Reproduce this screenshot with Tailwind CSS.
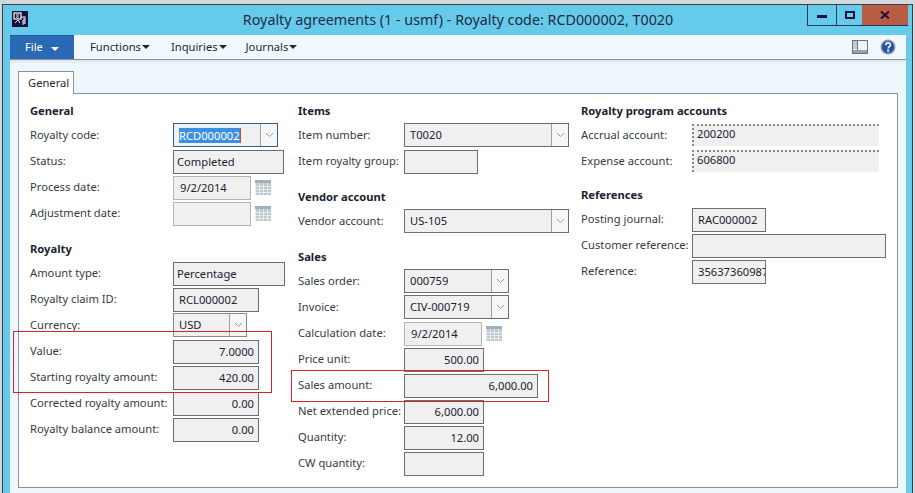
<!DOCTYPE html>
<html>
<head>
<meta charset="utf-8">
<script src="https://cdn.jsdelivr.net/npm/@tailwindcss/browser@4"></script>
</head>
<body class="m-0 overflow-hidden bg-[#d4d8dc]">
<div class="relative w-[915px] h-[493px] overflow-hidden font-['Noto_Sans',sans-serif] text-[11.2px] text-[#333b45] pt-[4px] pl-[2px] pr-[2px]">
  <!-- window -->
  <div class="w-full h-[489px] border-t border-l border-r border-[#3a4048] bg-[#66cbea] flex flex-col">
    <!-- title bar -->
    <div class="relative h-[30px] shrink-0 flex items-center justify-center">
      <svg class="absolute left-[9px] top-[6px] w-[16px] h-[16px]" viewBox="0 0 16 16">
        <rect width="16" height="16" fill="#14103e"/>
        <rect x="2" y="2" width="7" height="6" fill="none" stroke="#fff" stroke-width="1.2"/>
        <path d="M4 4h3M4 6h3M9 6h3v7M3 12l3-3 2 3M11 9v5M13 5v8" stroke="#e8e8f0" stroke-width="1" fill="none"/>
      </svg>
      <span class="text-[14.3px] text-[#1f2a44] ml-[1px]">Royalty agreements (1 - usmf) - Royalty code: RCD000002, T0020</span>
      <div class="absolute right-[4px] top-0 flex h-[21px] border-b border-[#1e3d55]">
        <div class="w-[29px] border-l border-[#1e3d55] flex items-center justify-center">
          <div class="w-[10px] h-[3px] bg-[#1c0f40] mt-[2px]"></div>
        </div>
        <div class="w-[26px] border-l border-[#1e3d55] flex items-center justify-center">
          <div class="w-[10px] h-[8px] border-2 border-[#1c0f40] mb-[1px]"></div>
        </div>
        <div class="w-[46px] bg-[#b95c44] flex items-center justify-center">
          <svg class="w-[10px] h-[8px]" viewBox="0 0 10 8"><path d="M1 0.5l8 7M9 0.5l-8 7" stroke="#1c0f40" stroke-width="2" fill="none"/></svg>
        </div>
      </div>
    </div>
    <!-- body -->
    <div class="flex-1 ml-[7px] mr-[6px] bg-[#eef7fd] flex flex-col min-h-0">
      <!-- ribbon -->
      <div class="h-[25px] shrink-0 bg-[#f1f8fe] border-b border-[#8b9199] flex items-center relative">
        <div class="w-[64px] h-[24px] bg-[#2a6ab5] text-white flex items-center pl-[15px] gap-[8px] border-t border-[#1d5aa3]">
          <span>File</span>
          <span class="w-0 h-0 border-l-[4px] border-r-[4px] border-t-[4px] border-l-transparent border-r-transparent border-t-white mt-[2px]"></span>
        </div>
        <div class="flex ml-[16px] gap-[19px] text-[#1f2733]">
          <span class="flex items-center gap-[1px] mr-[2px]">Functions<i class="w-0 h-0 border-l-[4px] border-r-[4px] border-t-[4px] border-l-transparent border-r-transparent border-t-[#1f2733]"></i></span>
          <span class="flex items-center gap-[1px]">Inquiries<i class="w-0 h-0 border-l-[4px] border-r-[4px] border-t-[4px] border-l-transparent border-r-transparent border-t-[#1f2733]"></i></span>
          <span class="flex items-center gap-[1px]">Journals<i class="w-0 h-0 border-l-[4px] border-r-[4px] border-t-[4px] border-l-transparent border-r-transparent border-t-[#1f2733]"></i></span>
        </div>
        <svg class="absolute left-[842px] top-[5px] w-[16px] h-[14px]" viewBox="0 0 16 14">
          <rect x="0.5" y="0.5" width="15" height="13" fill="#f4f4f4" stroke="#6d747c"/>
          <rect x="1" y="1" width="4" height="8" fill="#c8cacc"/>
          <rect x="1" y="10" width="14" height="3" fill="#9aa0a6"/>
          <path d="M5.5 1v9" stroke="#6d747c"/>
        </svg>
        <svg class="absolute left-[870px] top-[4px] w-[16px] h-[16px]" viewBox="0 0 16 16">
          <circle cx="8" cy="8" r="7.5" fill="#8f98a3"/>
          <circle cx="8" cy="8" r="6" fill="#1d52ad"/>
          <path d="M5.8 6.2c0-3 4.6-3 4.6-.2 0 1.7-2.2 1.7-2.2 3.4" stroke="#fff" stroke-width="1.7" fill="none"/>
          <rect x="7.2" y="10.6" width="2" height="2" fill="#fff"/>
        </svg>
      </div>
      <!-- tab strip -->
      <div class="h-[11px] shrink-0 bg-gradient-to-b from-[#dce3e9] to-[#eef7fd] [background-size:100%_4px] bg-no-repeat"></div>
      <div class="ml-[8px] w-[56px] h-[23px] -mb-px relative z-10 bg-white border border-b-0 border-[#8b9199] pl-[9px] pt-[3px] text-[#1f2733]">General</div>
      <!-- panel -->
      <div class="ml-[8px] mr-[8px] h-[395px] bg-white border border-[#8b9199] pt-[7px] pl-[11px] flex shrink-0 whitespace-nowrap">
        <!-- col 1 -->
        <div class="w-[268px] shrink-0 flex flex-col">
          <div class="h-[22px] pb-[1px] font-bold text-[#1a2230] flex items-center">General</div>
          <div class="h-[26px] flex items-center">
            <span class="w-[143px] shrink-0 mb-[2px]">Royalty code:</span>
            <div class="w-[105px] h-[24px] -translate-y-px border border-[#2f5f8c] bg-[#f0f0f0] flex items-center pl-[5px]">
              <span class="bg-[#3d8fe0] text-white h-[15px] leading-[15px] border-r border-[#c9502f]">RCD000002</span>
              <span class="ml-auto w-[17px] h-full border-l border-[#a0a0a0] bg-[#f6f6f6] flex items-center justify-center"><svg class="w-[9px] h-[6px]" viewBox="0 0 9 6"><path d="M1 1l3.5 3.5L8 1" stroke="#9a9a9a" fill="none"/></svg></span>
            </div>
          </div>
          <div class="h-[26px] flex items-center">
            <span class="w-[143px] shrink-0 mb-[2px]">Status:</span>
            <div class="w-[111px] h-[24px] border border-[#6e6e6e] bg-[#f0f0f0] flex items-center pl-[3px] text-[#1a2230]">Completed</div>
          </div>
          <div class="h-[26px] flex items-center">
            <span class="w-[143px] shrink-0 mb-[2px]">Process date:</span>
            <div class="w-[78px] h-[24px] border border-[#b4b4b4] bg-[#f0f0f0] flex items-center pl-[6px] text-[#1a2230]">9/2/2014</div>
            <svg class="ml-[4px] w-[16px] h-[15px] mb-[2px]" viewBox="0 0 16 15"><rect width="16" height="15" fill="#bcc9cf"/><rect y="0" width="16" height="3" fill="#9fb0b8"/><path d="M0.5 3v12M4.5 3v12M8.5 3v12M12.5 3v12M0 6.5h16M0 9.5h16M0 12.5h16" stroke="#e6edf0"/></svg>
          </div>
          <div class="h-[26px] flex items-center">
            <span class="w-[143px] shrink-0 mb-[2px]">Adjustment date:</span>
            <div class="w-[78px] h-[24px] border border-[#b4b4b4] bg-[#f0f0f0]"></div>
            <svg class="ml-[4px] w-[16px] h-[15px] mb-[2px]" viewBox="0 0 16 15"><rect width="16" height="15" fill="#bcc9cf"/><rect y="0" width="16" height="3" fill="#9fb0b8"/><path d="M0.5 3v12M4.5 3v12M8.5 3v12M12.5 3v12M0 6.5h16M0 9.5h16M0 12.5h16" stroke="#e6edf0"/></svg>
          </div>
          <div class="h-[12px]"></div>
          <div class="h-[22px] pb-[1px] font-bold text-[#1a2230] flex items-center">Royalty</div>
          <div class="h-[26px] flex items-center">
            <span class="w-[143px] shrink-0 mb-[2px]">Amount type:</span>
            <div class="w-[112px] h-[24px] border border-[#6e6e6e] bg-[#f0f0f0] flex items-center pl-[3px] text-[#1a2230]">Percentage</div>
          </div>
          <div class="h-[26px] flex items-center">
            <span class="w-[143px] shrink-0 mb-[2px]">Royalty claim ID:</span>
            <div class="w-[86px] h-[24px] border border-[#6e6e6e] bg-[#f0f0f0] flex items-center pl-[5px] text-[#1a2230]">RCL000002</div>
          </div>
          <div class="h-[26px] flex items-center">
            <span class="w-[143px] shrink-0 mb-[2px]">Currency:</span>
            <div class="w-[74px] h-[24px] -translate-y-px border border-[#8a8a8a] bg-[#f0f0f0] flex items-center pl-[5px] text-[#1a2230]">USD
              <span class="ml-auto w-[17px] h-full border-l border-[#a0a0a0] bg-[#f6f6f6] flex items-center justify-center"><svg class="w-[9px] h-[6px]" viewBox="0 0 9 6"><path d="M1 1l3.5 3.5L8 1" stroke="#9a9a9a" fill="none"/></svg></span>
            </div>
          </div>
          <div class="h-[26px] flex items-center">
            <span class="w-[143px] shrink-0 mb-[2px]">Value:</span>
            <div class="w-[86px] h-[24px] border border-[#6e6e6e] bg-[#f0f0f0] flex items-center justify-end pr-[4px] text-[#1a2230]">7.0000</div>
          </div>
          <div class="h-[26px] flex items-center">
            <span class="w-[143px] shrink-0 mb-[2px]">Starting royalty amount:</span>
            <div class="w-[86px] h-[24px] border border-[#6e6e6e] bg-[#f0f0f0] flex items-center justify-end pr-[4px] text-[#1a2230]">420.00</div>
          </div>
          <div class="h-[26px] flex items-center">
            <span class="w-[143px] shrink-0 mb-[2px]">Corrected royalty amount:</span>
            <div class="w-[86px] h-[24px] border border-[#6e6e6e] bg-[#f0f0f0] flex items-center justify-end pr-[4px] text-[#1a2230]">0.00</div>
          </div>
          <div class="h-[26px] flex items-center">
            <span class="w-[143px] shrink-0 mb-[2px]">Royalty balance amount:</span>
            <div class="w-[86px] h-[24px] border border-[#6e6e6e] bg-[#f0f0f0] flex items-center justify-end pr-[4px] text-[#1a2230]">0.00</div>
          </div>
        </div>
        <!-- col 2 -->
        <div class="w-[283px] shrink-0 flex flex-col">
          <div class="h-[22px] pb-[1px] font-bold text-[#1a2230] flex items-center">Items</div>
          <div class="h-[26px] flex items-center">
            <span class="w-[106px] shrink-0 mb-[2px]">Item number:</span>
            <div class="w-[165px] h-[24px] -translate-y-px border border-[#6e6e6e] bg-[#f0f0f0] flex items-center pl-[5px] text-[#1a2230]">T0020
              <span class="ml-auto w-[17px] h-full border-l border-[#a0a0a0] bg-[#f6f6f6] flex items-center justify-center"><svg class="w-[9px] h-[6px]" viewBox="0 0 9 6"><path d="M1 1l3.5 3.5L8 1" stroke="#9a9a9a" fill="none"/></svg></span>
            </div>
          </div>
          <div class="h-[26px] flex items-center">
            <span class="w-[106px] shrink-0 mb-[2px]">Item royalty group:</span>
            <div class="w-[74px] h-[24px] border border-[#6e6e6e] bg-[#f0f0f0]"></div>
          </div>
          <div class="h-[12px]"></div>
          <div class="h-[22px] pb-[1px] font-bold text-[#1a2230] flex items-center">Vendor account</div>
          <div class="h-[26px] flex items-center">
            <span class="w-[106px] shrink-0 mb-[2px]">Vendor account:</span>
            <div class="w-[165px] h-[24px] -translate-y-px border border-[#6e6e6e] bg-[#f0f0f0] flex items-center pl-[5px] text-[#1a2230]">US-105
              <span class="ml-auto w-[17px] h-full border-l border-[#a0a0a0] bg-[#f6f6f6] flex items-center justify-center"><svg class="w-[9px] h-[6px]" viewBox="0 0 9 6"><path d="M1 1l3.5 3.5L8 1" stroke="#9a9a9a" fill="none"/></svg></span>
            </div>
          </div>
          <div class="h-[12px]"></div>
          <div class="h-[22px] pb-[1px] font-bold text-[#1a2230] flex items-center">Sales</div>
          <div class="h-[26px] flex items-center">
            <span class="w-[106px] shrink-0 mb-[2px]">Sales order:</span>
            <div class="w-[105px] h-[24px] -translate-y-px border border-[#6e6e6e] bg-[#f0f0f0] flex items-center pl-[5px] text-[#1a2230]">000759
              <span class="ml-auto w-[17px] h-full border-l border-[#a0a0a0] bg-[#f6f6f6] flex items-center justify-center"><svg class="w-[9px] h-[6px]" viewBox="0 0 9 6"><path d="M1 1l3.5 3.5L8 1" stroke="#9a9a9a" fill="none"/></svg></span>
            </div>
          </div>
          <div class="h-[26px] flex items-center">
            <span class="w-[106px] shrink-0 mb-[2px]">Invoice:</span>
            <div class="w-[105px] h-[24px] -translate-y-px border border-[#6e6e6e] bg-[#f0f0f0] flex items-center pl-[5px] text-[#1a2230]">CIV-000719
              <span class="ml-auto w-[17px] h-full border-l border-[#a0a0a0] bg-[#f6f6f6] flex items-center justify-center"><svg class="w-[9px] h-[6px]" viewBox="0 0 9 6"><path d="M1 1l3.5 3.5L8 1" stroke="#9a9a9a" fill="none"/></svg></span>
            </div>
          </div>
          <div class="h-[26px] flex items-center">
            <span class="w-[106px] shrink-0 mb-[2px]">Calculation date:</span>
            <div class="w-[78px] h-[24px] border border-[#b4b4b4] bg-[#f0f0f0] flex items-center pl-[6px] text-[#1a2230]">9/2/2014</div>
            <svg class="ml-[4px] w-[16px] h-[15px] mb-[2px]" viewBox="0 0 16 15"><rect width="16" height="15" fill="#bcc9cf"/><rect y="0" width="16" height="3" fill="#9fb0b8"/><path d="M0.5 3v12M4.5 3v12M8.5 3v12M12.5 3v12M0 6.5h16M0 9.5h16M0 12.5h16" stroke="#e6edf0"/></svg>
          </div>
          <div class="h-[26px] flex items-center">
            <span class="w-[106px] shrink-0 mb-[2px]">Price unit:</span>
            <div class="w-[80px] h-[24px] border border-[#6e6e6e] bg-[#f0f0f0] flex items-center justify-end pr-[4px] text-[#1a2230]">500.00</div>
          </div>
          <div class="h-[26px] flex items-center">
            <span class="w-[106px] shrink-0 mb-[2px]">Sales amount:</span>
            <div class="w-[134px] h-[24px] border border-[#6e6e6e] bg-[#f0f0f0] flex items-center justify-end pr-[4px] text-[#1a2230]">6,000.00</div>
          </div>
          <div class="h-[26px] flex items-center">
            <span class="w-[106px] shrink-0 mb-[2px]">Net extended price:</span>
            <div class="w-[80px] h-[24px] border border-[#6e6e6e] bg-[#f0f0f0] flex items-center justify-end pr-[4px] text-[#1a2230]">6,000.00</div>
          </div>
          <div class="h-[26px] flex items-center">
            <span class="w-[106px] shrink-0 mb-[2px]">Quantity:</span>
            <div class="w-[80px] h-[24px] border border-[#6e6e6e] bg-[#f0f0f0] flex items-center justify-end pr-[4px] text-[#1a2230]">12.00</div>
          </div>
          <div class="h-[26px] flex items-center">
            <span class="w-[106px] shrink-0 mb-[2px]">CW quantity:</span>
            <div class="w-[80px] h-[24px] border border-[#6e6e6e] bg-[#f0f0f0]"></div>
          </div>
        </div>
        <!-- col 3 -->
        <div class="flex-1 flex flex-col">
          <div class="h-[22px] pb-[1px] font-bold text-[#1a2230] flex items-center">Royalty program accounts</div>
          <div class="h-[26px] flex items-center">
            <span class="w-[111px] shrink-0 mb-[2px]">Accrual account:</span>
            <div class="w-[187px] h-[22px] -translate-y-px border-t-2 border-l-2 border-dotted border-[#8a8a8a] bg-[#f0f0f0] pl-[3px] leading-[15px] text-[#1a2230]">200200</div>
          </div>
          <div class="h-[26px] flex items-center">
            <span class="w-[111px] shrink-0 mb-[2px]">Expense account:</span>
            <div class="w-[187px] h-[22px] -translate-y-px border-t-2 border-l-2 border-dotted border-[#8a8a8a] bg-[#f0f0f0] pl-[3px] leading-[15px] text-[#1a2230]">606800</div>
          </div>
          <div class="h-[10px]"></div>
          <div class="h-[22px] pb-[1px] font-bold text-[#1a2230] flex items-center">References</div>
          <div class="h-[26px] flex items-center">
            <span class="w-[111px] shrink-0 mb-[2px]">Posting journal:</span>
            <div class="w-[74px] h-[24px] border border-[#6e6e6e] bg-[#f0f0f0] flex items-center pl-[5px] text-[#1a2230]">RAC000002</div>
          </div>
          <div class="h-[26px] flex items-center">
            <span class="w-[111px] shrink-0 mb-[2px]">Customer reference:</span>
            <div class="w-[194px] h-[24px] border border-[#6e6e6e] bg-[#f0f0f0]"></div>
          </div>
          <div class="h-[26px] flex items-center">
            <span class="w-[111px] shrink-0 mb-[2px]">Reference:</span>
            <div class="w-[74px] h-[24px] border border-[#6e6e6e] bg-[#f0f0f0] flex items-center pl-[5px] text-[#1a2230] overflow-hidden">35637360987</div>
          </div>
        </div>
      </div>
    </div>
  </div>
  <!-- annotation rectangles -->
  <div class="absolute left-[13px] top-[331px] w-[259px] h-[62px] border border-[#d8232a]"></div>
  <div class="absolute left-[291px] top-[370px] w-[258px] h-[32px] border border-[#d8232a]"></div>
</div>
</body>
</html>
